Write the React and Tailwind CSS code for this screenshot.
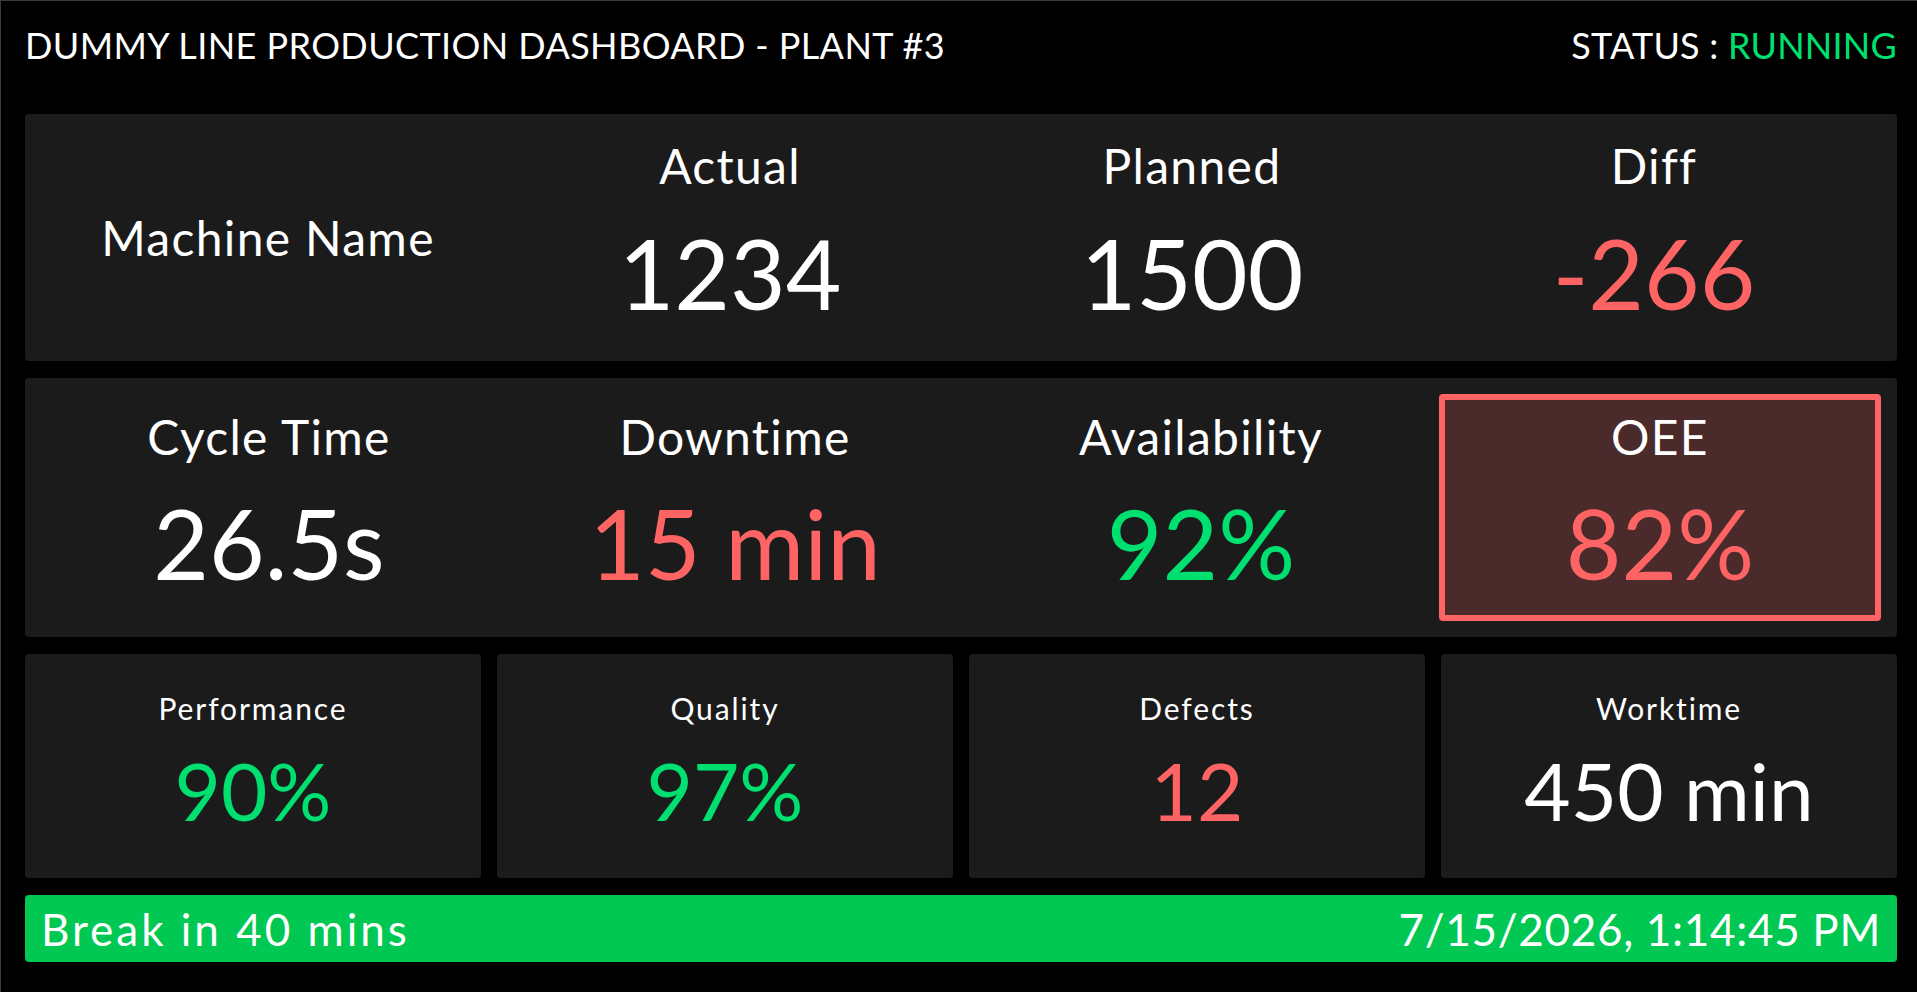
import React from 'react';

const RED = 'text-[#ff6464]';
const GREEN = 'text-[#00e070]';
const WHITE = 'text-white';

const output = [
  { label: 'Actual', value: '1234', color: WHITE },
  { label: 'Planned', value: '1500', color: WHITE },
  { label: 'Diff', value: '-266', color: RED },
];

const timing = [
  { label: 'Cycle Time', value: '26.5s', color: WHITE },
  { label: 'Downtime', value: '15 min', color: RED },
  { label: 'Availability', value: '92%', color: GREEN },
];

const small = [
  { label: 'Performance', value: '90%', color: GREEN },
  { label: 'Quality', value: '97%', color: GREEN },
  { label: 'Defects', value: '12', color: RED },
  { label: 'Worktime', value: '450 min', color: WHITE },
];

export default function App() {
  return (
    <div
      className="min-h-screen bg-black text-white border-t border-l border-[#3a3a3a] pl-6 pr-5 pt-[10px]"
      style={{ fontFamily: 'Lato, "Open Sans", sans-serif' }}
    >
      {/* Header */}
      <div className="h-[67px] flex items-center justify-between mb-[36px]">
        <h1 className="text-[36px] leading-none font-normal tracking-[0.4px]">DUMMY LINE PRODUCTION DASHBOARD - PLANT #3</h1>
        <div className="text-[36px] leading-none tracking-[0.2px]">
          STATUS : <span className={GREEN}>RUNNING</span>
        </div>
      </div>

      <div className="flex flex-col gap-[17px]">
        {/* Output row */}
        <div className="h-[247px] bg-[#1b1b1b] rounded-[4px] px-3 grid grid-cols-4">
          <div className="flex items-center justify-center">
            <span className="text-[48px] leading-none tracking-[1.3px]">Machine Name</span>
          </div>
          {output.map((s) => (
            <div key={s.label} className="flex flex-col items-center pt-[28px]">
              <span className="text-[48px] leading-none h-[48px] tracking-[1.3px]">{s.label}</span>
              <span className={`text-[96px] leading-none mt-[35px] ${s.color}`}>{s.value}</span>
            </div>
          ))}
        </div>

        {/* Timing row */}
        <div className="h-[259px] bg-[#1b1b1b] rounded-[4px] p-4 grid grid-cols-[456px_456px_456px_1fr] gap-[10px]">
          {timing.map((s) => (
            <div key={s.label} className="flex flex-col items-center pt-[19px]">
              <span className="text-[48px] leading-none h-[48px] tracking-[1.3px]">{s.label}</span>
              <span className={`text-[96px] leading-none mt-[34px] ${s.color}`}>{s.value}</span>
            </div>
          ))}
          <div className="flex flex-col items-center pt-[13px] border-[6px] border-[#ff6464] rounded-[4px] bg-[#4a2a2b]">
            <span className="text-[48px] leading-none h-[48px] tracking-[1.3px]">OEE</span>
            <span className={`text-[96px] leading-none mt-[34px] ${RED}`}>82%</span>
          </div>
        </div>

        {/* Small stat cards */}
        <div className="grid grid-cols-4 gap-4">
          {small.map((s) => (
            <div key={s.label} className="h-[224px] bg-[#1b1b1b] rounded-[4px] flex flex-col items-center pt-[39px]">
              <span className="text-[30px] leading-none h-[30px] tracking-[1.9px]">{s.label}</span>
              <span className={`text-[80px] leading-none mt-[27px] ${s.color}`}>{s.value}</span>
            </div>
          ))}
        </div>

        {/* Footer bar */}
        <div className="h-[67px] bg-[#00c853] rounded-[4px] px-4 flex items-center justify-between">
          <span className="text-[44px] leading-none tracking-[3px]">Break in 40 mins</span>
          <span className="text-[44px] leading-none tracking-[0.7px]">7/15/2026, 1:14:45 PM</span>
        </div>
      </div>
    </div>
  );
}
